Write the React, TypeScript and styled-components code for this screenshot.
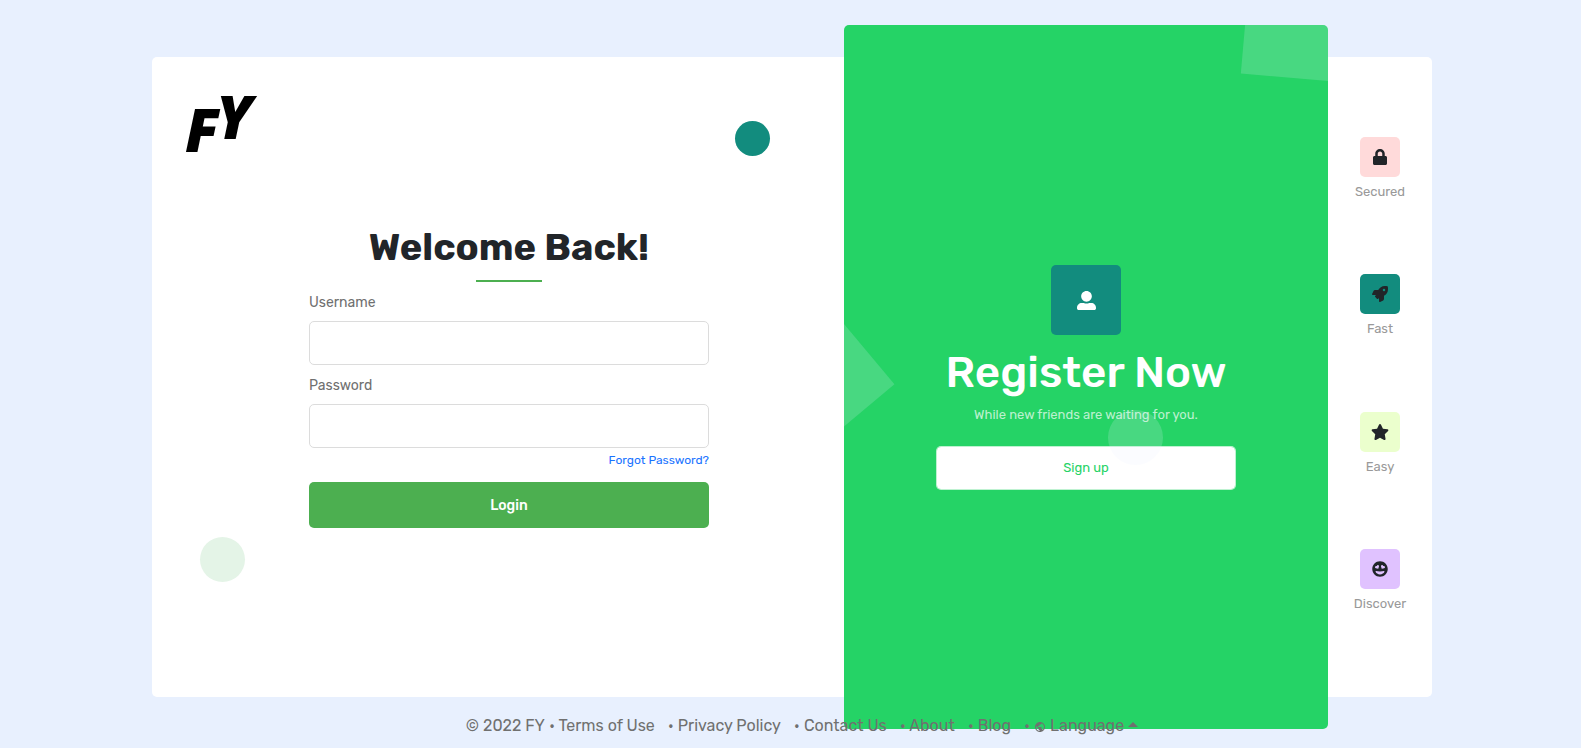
import React from 'react';
import styled, { createGlobalStyle } from 'styled-components';
import { FaGrinHearts, FaLock, FaRocket, FaStar, FaUserAlt } from 'react-icons/fa';
import { MdPublic } from 'react-icons/md';

const GlobalStyle = createGlobalStyle`
  *, *::before, *::after { box-sizing: border-box; }
  body {
    margin: 0;
    background: #e8f0fe;
    color: #212529;
    font-family: Rubik, Inter, sans-serif;
    font-size: 16px;
    line-height: 24px;
  }
`;

const Page = styled.div`
  padding: 57px 16px 8px 19px;
`;

const Card = styled.main`
  display: flex;
  max-width: 1280px;
  min-height: 640px;
  margin: 0 auto;
  background: #fff;
  border-radius: 5px;
`;

const LoginPanel = styled.section`
  position: relative;
  flex: 1;
  padding: 32px 10px 32px 32px;
`;

const Logo = styled.svg`
  display: block;
  width: 80px;
  height: 64px;
  overflow: visible;
`;

const LogoLetters = styled.text`
  font: italic 800 60px "Open Sans", sans-serif;
  fill: #000;
`;

const Dot = styled.span<{ $size: number; $color: string }>`
  position: absolute;
  width: ${(p) => p.$size}px;
  height: ${(p) => p.$size}px;
  border-radius: 50%;
  background: ${(p) => p.$color};
  pointer-events: none;
`;

const TealDot = styled(Dot)`
  top: 64px;
  right: 74px;
`;

const PaleDot = styled(Dot)`
  bottom: 115px;
  left: 48px;
`;

const LoginForm = styled.form`
  display: flex;
  flex-direction: column;
  max-width: 400px;
  margin: 71px auto 0;
`;

const Heading = styled.h1`
  margin: 0;
  font-size: 38px;
  font-weight: 700;
  line-height: 46px;
  text-align: center;
`;

const Underline = styled.span`
  align-self: center;
  width: 66px;
  height: 2px;
  margin-top: 10px;
  background: #4caf50;
`;

const Label = styled.label`
  margin: 11px 0 8px;
  color: #707070;
  font-size: 14px;
  line-height: 20px;
`;

const Input = styled.input`
  height: 44px;
  padding: 0 12px;
  border: 1px solid #dcdcdc;
  border-radius: 5px;
  background: #fff;
  font: inherit;
`;

const ForgotLink = styled.a`
  align-self: flex-end;
  margin-top: 4px;
  color: #1a73ff;
  font-size: 12px;
  line-height: 16px;
  text-decoration: none;
`;

const LoginButton = styled.button`
  height: 46px;
  margin-top: 14px;
  border: 0;
  border-radius: 5px;
  background: #4caf50;
  color: #fff;
  font: 500 14px Rubik, Inter, sans-serif;
  cursor: pointer;
`;

const RegisterPanel = styled.section`
  position: relative;
  display: flex;
  flex: 0 1 484px;
  flex-direction: column;
  align-items: center;
  justify-content: center;
  margin: -32px 0;
  padding-top: 1px;
  overflow: hidden;
  border-radius: 5px;
  background: #25d366;
  color: #fff;
`;

const Square = styled.span`
  position: absolute;
  width: 100px;
  height: 100px;
  background: rgba(232, 240, 254, 0.18);
`;

const CornerSquare = styled(Square)`
  top: -47px;
  right: -17px;
  transform: rotate(5deg);
`;

const EdgeSquare = styled(Square)`
  top: 43%;
  left: -70px;
  transform: rotate(50deg);
`;

const PanelDot = styled(Dot)`
  top: 385px;
  left: calc(50% + 22px);
`;

const UserTile = styled.span`
  display: grid;
  place-items: center;
  width: 70px;
  height: 70px;
  border-radius: 5px;
  background: #128c7e;
`;

const RegisterTitle = styled.h2`
  margin: 11px 0 7px;
  font-size: 44px;
  font-weight: 500;
  line-height: 52px;
`;

const RegisterText = styled.p`
  margin: 0 0 21px;
  color: rgba(255, 255, 255, 0.7);
  font-size: 13px;
  line-height: 20px;
`;

const SignUpButton = styled.button`
  width: 300px;
  max-width: 90%;
  height: 44px;
  padding: 0 0 2px;
  border: 1px solid rgba(255, 255, 255, 0.7);
  border-radius: 5px;
  background: #fff padding-box;
  color: #25d366;
  font: 400 13px Rubik, Inter, sans-serif;
  cursor: pointer;
`;

const FeatureList = styled.ul`
  display: flex;
  flex: 0 0 104px;
  flex-direction: column;
  align-items: center;
  justify-content: space-between;
  margin: 0;
  padding: 80px 0 83px;
  list-style: none;
`;

const Feature = styled.li`
  display: flex;
  flex-direction: column;
  align-items: center;
  gap: 5px;
  color: #999;
  font-size: 13px;
  line-height: 20px;
`;

const FeatureTile = styled.span<{ $color: string }>`
  display: grid;
  place-items: center;
  width: 40px;
  height: 40px;
  border-radius: 5px;
  background: ${(p) => p.$color};
  color: #212529;
  font-size: 16px;
`;

const StarIcon = styled(FaStar)`
  width: 18px;
  height: 16px;
`;

const Footer = styled.footer`
  position: relative;
  z-index: 1;
  display: flex;
  flex-wrap: wrap;
  justify-content: center;
  margin-top: 17px;
  padding-left: 20px;
  color: #707070;
`;

const Copyright = styled.span`
  margin-right: 4px;
`;

const FooterItem = styled.span`
  margin-right: 13px;

  &:last-child { margin-right: 0; }
`;

const FooterLink = styled.a`
  color: inherit;
  text-decoration: none;
`;

const LanguageButton = styled.button`
  padding: 0;
  border: 0;
  background: none;
  color: inherit;
  font: inherit;
  cursor: pointer;

  svg { margin-right: 4px; vertical-align: -2px; }

  &::after {
    content: "";
    display: inline-block;
    margin-left: 4px;
    border: 5px solid transparent;
    border-top: 0;
    border-bottom-color: currentColor;
    vertical-align: 4px;
  }
`;

const features = [
  { name: 'Secured', color: '#ffdada', Icon: FaLock },
  { name: 'Fast', color: '#128c7e', Icon: FaRocket },
  { name: 'Easy', color: '#ebffcd', Icon: StarIcon },
  { name: 'Discover', color: '#e0c2ff', Icon: FaGrinHearts },
];

const footerLinks = ['Terms of Use', 'Privacy Policy', 'Contact Us', 'About', 'Blog'];

export default function App() {
  return (
    <Page>
      <GlobalStyle />
      <Card>
        <LoginPanel>
          <Logo viewBox="0 0 80 64" role="img" aria-label="FY">
            <LogoLetters x="1" y="63">
              F<tspan x="32" y="50">Y</tspan>
            </LogoLetters>
          </Logo>
          <TealDot $size={35} $color="#128c7e" />
          <PaleDot $size={45} $color="#e4f4e7" />
          <LoginForm onSubmit={(e) => e.preventDefault()}>
            <Heading>Welcome Back!</Heading>
            <Underline />
            <Label htmlFor="username">Username</Label>
            <Input id="username" type="text" autoComplete="username" />
            <Label htmlFor="password">Password</Label>
            <Input id="password" type="password" autoComplete="current-password" />
            <ForgotLink href="#forgot">Forgot Password?</ForgotLink>
            <LoginButton type="submit">Login</LoginButton>
          </LoginForm>
        </LoginPanel>

        <RegisterPanel>
          <CornerSquare />
          <EdgeSquare />
          <UserTile>
            <FaUserAlt size={19} />
          </UserTile>
          <RegisterTitle>Register Now</RegisterTitle>
          <RegisterText>While new friends are waiting for you.</RegisterText>
          <SignUpButton type="button">Sign up</SignUpButton>
          <PanelDot $size={55} $color="rgba(232, 240, 254, 0.18)" />
        </RegisterPanel>

        <FeatureList>
          {features.map(({ name, color, Icon }) => (
            <Feature key={name}>
              <FeatureTile $color={color}>
                <Icon />
              </FeatureTile>
              {name}
            </Feature>
          ))}
        </FeatureList>
      </Card>

      <Footer>
        <Copyright>© 2022 FY</Copyright>
        {footerLinks.map((name) => (
          <FooterItem key={name}>
            • <FooterLink href="#">{name}</FooterLink>
          </FooterItem>
        ))}
        <FooterItem>
          •{' '}
          <LanguageButton type="button">
            <MdPublic size={12} />
            Language
          </LanguageButton>
        </FooterItem>
      </Footer>
    </Page>
  );
}
